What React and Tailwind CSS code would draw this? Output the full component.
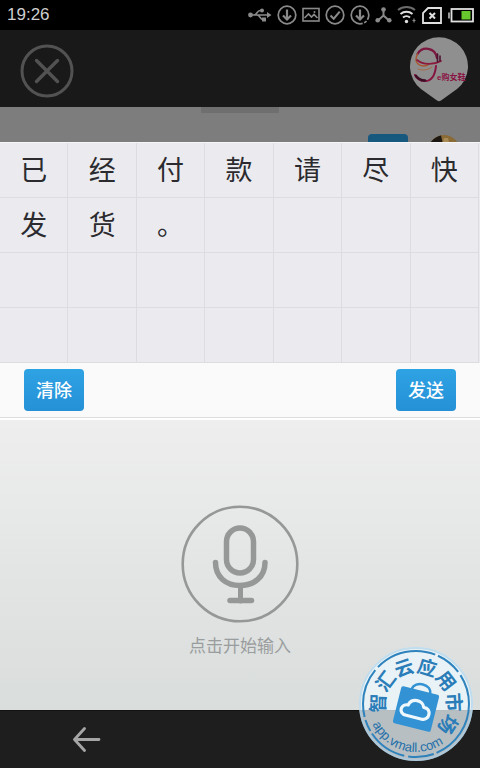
import React, { useState } from 'react';

const COLUMNS = 7;
const ROWS = 4;

const UsbIcon = () => (
  <svg width="24" height="20" viewBox="0 0 24 20" fill="none" stroke="#8a8a8a" strokeWidth="1.6">
    <path d="M3 10h17M6 10c3 0 3-4.5 6-4.5h2M9 10c3 0 3 4.5 6 4.5h1" />
    <circle cx="2.5" cy="10" r="2.4" fill="#8a8a8a" stroke="none" />
    <circle cx="14" cy="5.5" r="2" fill="#8a8a8a" stroke="none" />
    <path d="M14 12.5h4v4h-4zM19 7l4.5 3-4.5 3z" fill="#8a8a8a" stroke="none" />
  </svg>
);

const DownloadIcon = ({ broken }) => (
  <svg width="20" height="20" viewBox="0 0 20 20" fill="none" stroke="#8a8a8a" strokeWidth="1.7">
    <circle cx="10" cy="10" r="8.8" strokeDasharray={broken ? '5 1.5 3 1.5 60' : undefined} />
    <path d="M10 4.5v10" strokeWidth="2.2" />
    <path d="M6 10.5l4 4 4-4" strokeWidth="2.2" />
  </svg>
);

const PictureIcon = () => (
  <svg width="18" height="20" viewBox="0 0 18 20" fill="none" stroke="#8a8a8a" strokeWidth="1.6">
    <rect x="1" y="3.5" width="16" height="12.5" />
    <path d="M2.5 13l4-4 3 3 2.5-2.5 3.5 3.5" />
    <circle cx="12.5" cy="7" r="1" fill="#8a8a8a" stroke="none" />
  </svg>
);

const CheckIcon = () => (
  <svg width="20" height="20" viewBox="0 0 20 20" fill="none" stroke="#8a8a8a" strokeWidth="1.7">
    <circle cx="10" cy="10" r="8.8" />
    <path d="M5.5 10.5l3.2 3.2 6-7" strokeWidth="2" />
  </svg>
);

const HubIcon = () => (
  <svg width="17" height="20" viewBox="0 0 17 20" fill="none" stroke="#8a8a8a" strokeWidth="2">
    <path d="M8.5 5v6M8.5 10.5l-5.5 5M8.5 10.5l5.5 5" />
    <g fill="#8a8a8a" stroke="none">
      <circle cx="8.5" cy="4.5" r="2.3" />
      <circle cx="2.7" cy="15.3" r="2.3" />
      <circle cx="14.3" cy="15.3" r="2.3" />
    </g>
  </svg>
);

const WifiIcon = () => (
  <svg width="20" height="20" viewBox="0 0 20 20" fill="none" strokeWidth="2">
    <path d="M1 5c5-4 12-4 17 0" stroke="#6b6b6b" />
    <path d="M3.5 9c3.5-3 8.5-3 12 0" stroke="#e0e0e0" />
    <path d="M6 12.5c2-1.8 5-1.8 7 0" stroke="#e0e0e0" />
    <circle cx="9.5" cy="16.5" r="1.7" fill="#e0e0e0" />
    <path d="M17 13.5v4M15.5 15.5h3" stroke="#8a8a8a" strokeWidth="1.2" />
  </svg>
);

const SimIcon = () => (
  <svg width="20" height="20" viewBox="0 0 20 20" fill="none" stroke="#e0e0e0" strokeWidth="1.8">
    <path d="M6 3h13v15H1V8z" />
    <path d="M7.5 8l5.5 5.5M13 8l-5.5 5.5" strokeWidth="2" />
  </svg>
);

const BatteryIcon = () => (
  <svg width="27" height="20" viewBox="-2 0 27 20" fill="none">
    <path d="M0 7.5v6" stroke="#bdbdbd" strokeWidth="1.6" />
    <rect x="2.5" y="4" width="21.5" height="12.5" stroke="#e0e0e0" strokeWidth="1.8" />
    <rect x="12.5" y="6" width="9" height="8.5" fill="#67c92d" />
  </svg>
);

const StatusBar = () => (
  <div className="flex h-[30px] items-center justify-between bg-black pr-[6px] pl-[7px]">
    <span className="text-[17px] leading-5 text-[#cfcfcf]">19:26</span>
    <div className="flex gap-[5px]">
      <UsbIcon />
      <DownloadIcon />
      <PictureIcon />
      <CheckIcon />
      <DownloadIcon broken />
      <HubIcon />
      <WifiIcon />
      <SimIcon />
      <BatteryIcon />
    </div>
  </div>
);

const ShopPin = () => (
  <svg width="60" height="66" viewBox="0 0 60 66" fill="none" strokeLinecap="round">
    <path d="M32 64.5Q30 66 28 64.5L12 53A29 29 0 1 1 48 53Z" fill="#8f8f8f" />
    <path d="M28 22C26 11 13 10 8.5 18" stroke="#7c1740" strokeWidth="2.2" />
    <path d="M8.5 18C4 27 11 32 19 29" stroke="#a8572f" strokeWidth="1.4" />
    <path d="M8 24C14 29 25 29 32 25" stroke="#8c1a3c" strokeWidth="1.7" />
    <path d="M28.5 18v8M31 20v5" stroke="#4d1230" strokeWidth="1.6" />
    <path d="M9 33C14 35 19 34 23 31" stroke="#a8693f" strokeWidth="1" />
    <path d="M27 30C26 40 22 45 16 45C12 45 8 43 6 39" stroke="#86143f" strokeWidth="2" />
    <path d="M16 44.5C12 44.5 9 42.5 7 40" stroke="#3c0f26" strokeWidth="2.6" />
    <text x="28" y="44" fontSize="8" fontWeight="700" fill="#8a1545">e购女鞋</text>
  </svg>
);

const Header = () => (
  <header className="flex h-[77px] items-center justify-between bg-[#191919] pr-[11px] pl-5">
    <button aria-label="Close" className="mt-1">
      <svg width="54" height="54" viewBox="0 0 54 54" fill="none" stroke="#525252" strokeLinecap="round">
        <circle cx="27" cy="27" r="25" strokeWidth="3" />
        <path d="M16.5 16.5l21 21M37.5 16.5l-21 21" strokeWidth="3.4" />
      </svg>
    </button>
    <ShopPin />
  </header>
);

// Dimmed chat page that shows between the header and the input sheet
const ChatStrip = () => (
  <div className="grid h-[35px] grid-cols-[1fr_78px_1fr] overflow-hidden bg-[#7d7d7d]">
    <div className="col-start-2 h-[6px] bg-[#6f6f6f]" />
    <div className="flex justify-end gap-5 pr-5">
      <div className="mt-[27px] h-5 w-10 rounded bg-[#17587f]" />
      <svg className="mt-[28px]" width="32" height="32" viewBox="0 0 32 32">
        <circle cx="16" cy="16" r="16" fill="#8a6a35" />
        <path d="M0 16A16 16 0 0 1 13 .5l2 9z" fill="#1c1712" />
        <path d="M16 3l4 0 2 8-8 0z" fill="#a88a55" />
      </svg>
    </div>
  </div>
);

const CharacterGrid = ({ text }) => {
  const cells = Array.from({ length: COLUMNS * ROWS }, (_, index) => text[index] || '');

  return (
    <div className="grid grid-cols-7 border-t border-[#f6f6f8] bg-[#ebebef] pr-px">
      {cells.map((char, index) => (
        <div
          key={index}
          className="flex h-[55px] items-center justify-center border-r border-b border-[#dddde1] pt-[3px] text-[27px] leading-none text-[#2b2b2f]"
        >
          {char}
        </div>
      ))}
    </div>
  );
};

const ActionButton = ({ children, onClick }) => (
  <button
    onClick={onClick}
    className="h-[42px] w-[60px] rounded bg-linear-to-b from-[#2ea3e4] to-[#2590d6] pt-[2px] text-lg leading-none font-medium text-white"
  >
    {children}
  </button>
);

const MicIcon = () => (
  <svg width="118" height="118" viewBox="0 0 118 118" fill="none" stroke="#969898" strokeLinecap="round">
    <circle cx="59" cy="59" r="57.3" strokeWidth="2.6" />
    <rect x="45.5" y="23" width="27" height="45" rx="13.5" strokeWidth="5.5" />
    <path d="M34.5 57.5C34.5 72 45 80.5 59 80.5S84 72 84 57.5" strokeWidth="5.5" />
    <path d="M59.5 82v14" strokeWidth="5" />
    <path d="M49 95.5h21.5" strokeWidth="5.5" />
  </svg>
);

const MarketStamp = () => (
  <svg
    className="absolute right-[6px] bottom-[6px]"
    width="116"
    height="116"
    viewBox="-58 -58 116 116"
    fill="none"
  >
    <defs>
      <path id="stamp-top" d="M-9.1 29.6A31 31 0 1 1 9.1 29.6" transform="rotate(17)" />
      <path id="stamp-bottom" d="M-48 0A48 48 0 0 0 48 0" transform="rotate(15)" />
    </defs>
    <circle r="57" fill="#eef8fd" fillOpacity="0.74" />
    <circle r="56" stroke="#a5cfea" strokeOpacity="0.6" strokeWidth="2" />
    <circle r="53" stroke="#2f83bd" strokeWidth="2" strokeDasharray="62 3 26 4 40 3 12 3 50 4" />
    <g transform="translate(0 5) rotate(14)">
      <rect x="-19.5" y="-19" width="39" height="38" rx="2" fill="#3392d3" />
      <path d="M-9 -18C-8 -28 10 -28 10 -18" stroke="#3392d3" strokeWidth="2.4" />
      <path
        d="M-8 8.5C-17 8.5 -16 -2 -8.5 -2C-7 -10 5 -10.5 7 -3.5C16 -4.5 16 8.5 8 8.5Z"
        stroke="#eef8fd"
        strokeWidth="3.2"
        strokeLinejoin="round"
      />
    </g>
    <text fontSize="19" fontWeight="700" fill="#2a7db8" textAnchor="middle">
      <textPath href="#stamp-top" startOffset="50%">智汇云应用市场</textPath>
    </text>
    <text fontSize="13" fill="#1f6fa9" textAnchor="middle">
      <textPath href="#stamp-bottom" startOffset="50%">app.vmall.com</textPath>
    </text>
  </svg>
);

const App = () => {
  const [text, setText] = useState('已经付款请尽快发货。');

  return (
    <div className="relative flex min-h-screen flex-col overflow-hidden bg-[#1e1e1e] font-['Liberation_Sans','Noto_Sans_CJK_SC',sans-serif]">
      <StatusBar />
      <Header />
      <ChatStrip />
      <CharacterGrid text={text} />
      <div className="flex justify-between border-b border-[#dedede] bg-[#fafafa] px-6 py-[6px]">
        <ActionButton onClick={() => setText('')}>清除</ActionButton>
        <ActionButton>发送</ActionButton>
      </div>
      <main className="flex flex-1 flex-col items-center justify-center border-t-2 border-white bg-linear-to-b from-[#eeeeee] to-[#d9dddc] pt-[34px]">
        <button className="flex flex-col items-center gap-3 text-[17px] leading-6 text-[#9a9d9d]">
          <MicIcon />
          点击开始输入
        </button>
      </main>
      <nav className="flex h-[58px] items-center border-t border-[#111111] bg-[#1e1e1e] px-[72px]">
        <button aria-label="Back">
          <svg width="30" height="26" viewBox="0 0 30 26" fill="none" stroke="#a5a5a5" strokeWidth="2.8" strokeLinecap="round" strokeLinejoin="round">
            <path d="M27 12.5H3M12.5 1.5L2.5 12.5l10 11" />
          </svg>
        </button>
      </nav>
      <MarketStamp />
    </div>
  );
};

export default App;
